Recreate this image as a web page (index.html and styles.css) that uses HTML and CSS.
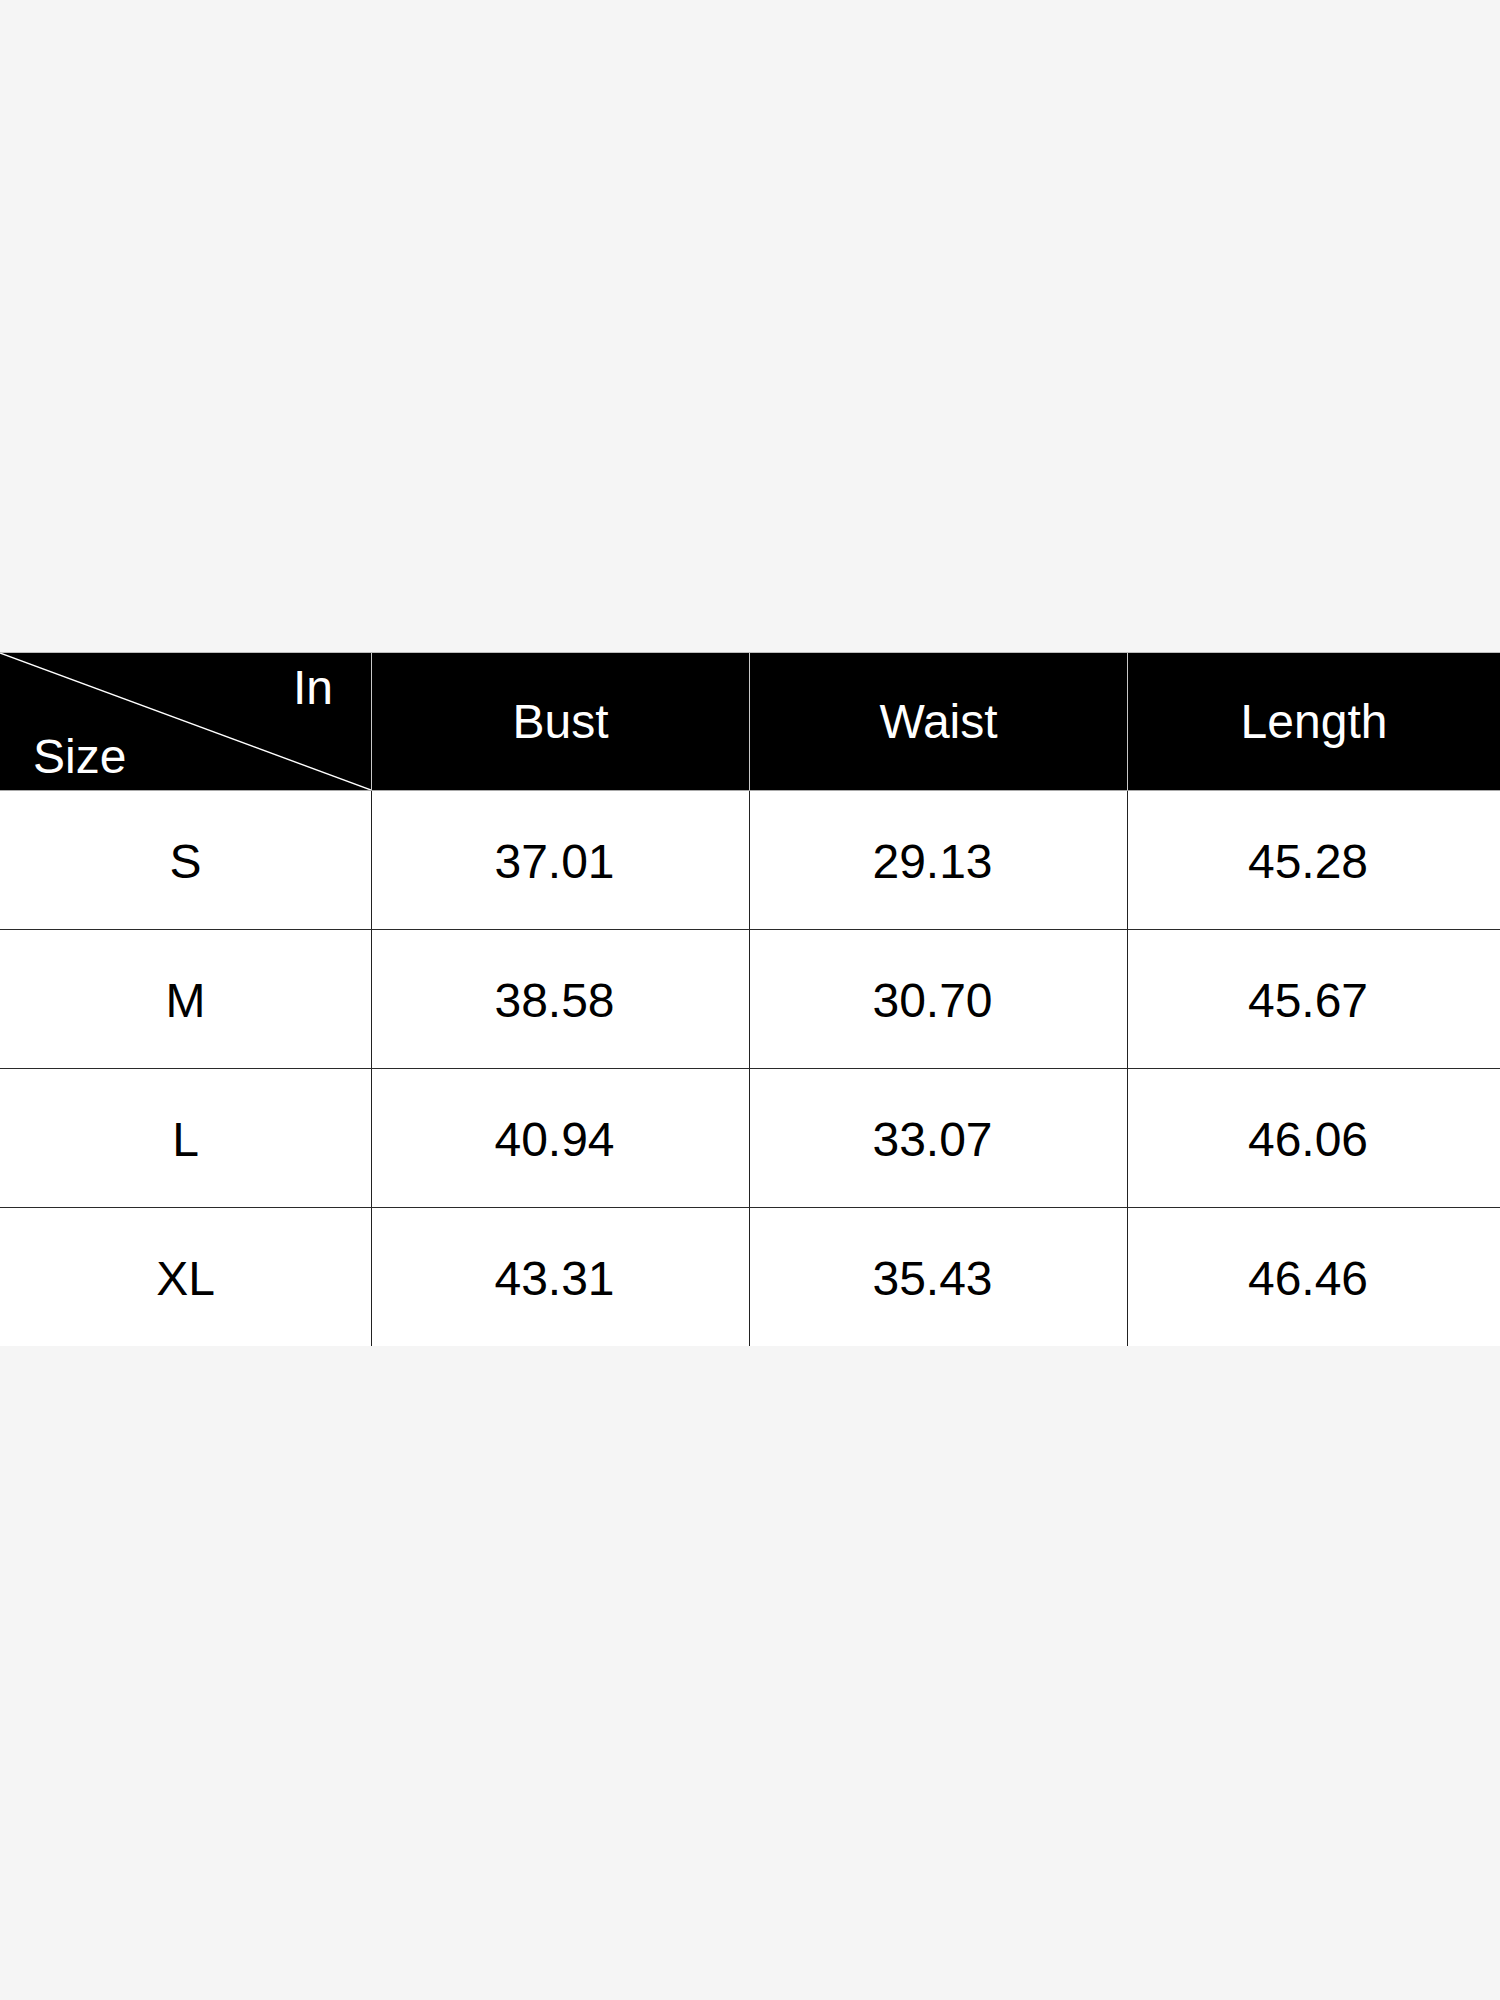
FILE: index.html
```html
<!DOCTYPE html>
<html lang="en">
<head>
<meta charset="utf-8">
<title>Size Chart</title>
<link rel="stylesheet" href="styles.css">
</head>
<body>
<main class="page">
  <div class="chart">
    <div class="row head">
      <div class="cell corner">
        <svg class="diag" viewBox="0 0 100 100" preserveAspectRatio="none" aria-hidden="true">
          <line x1="0" y1="0" x2="100" y2="100" stroke="#ffffff" stroke-width="1.4" vector-effect="non-scaling-stroke"/>
        </svg>
        <span class="in">In</span>
        <span class="size">Size</span>
      </div>
      <div class="cell">Bust</div>
      <div class="cell">Waist</div>
      <div class="cell">Length</div>
    </div>
    <div class="row body">
      <div class="cell">S</div>
      <div class="cell num">37.01</div>
      <div class="cell num">29.13</div>
      <div class="cell num">45.28</div>
    </div>
    <div class="row body">
      <div class="cell">M</div>
      <div class="cell num">38.58</div>
      <div class="cell num">30.70</div>
      <div class="cell num">45.67</div>
    </div>
    <div class="row body">
      <div class="cell">L</div>
      <div class="cell num">40.94</div>
      <div class="cell num">33.07</div>
      <div class="cell num">46.06</div>
    </div>
    <div class="row body last">
      <div class="cell">XL</div>
      <div class="cell num">43.31</div>
      <div class="cell num">35.43</div>
      <div class="cell num">46.46</div>
    </div>
  </div>
</main>
</body>
</html>
```

FILE: styles.css
```css
html, body {
  margin: 0;
  padding: 0;
  background: #f5f5f5;
}

.page {
  width: 1500px;
  height: 2000px;
  padding-top: 652px;
  box-sizing: border-box;
  font-family: "Liberation Sans", Arial, sans-serif;
}

.chart {
  width: 1500px;
  border-top: 1px solid #bdbdbd;
}

.row {
  display: grid;
  grid-template-columns: 371px 378px 378px 1fr;
  box-sizing: border-box;
}

.cell {
  display: flex;
  align-items: center;
  justify-content: center;
  font-size: 48px;
  line-height: 48px;
  padding-top: 4px;
  box-sizing: border-box;
}

.cell.num {
  padding-right: 12px;
}

.cell + .cell {
  border-left: 1px solid #222;
}

.head {
  height: 138px;
  background: #000;
  color: #fff;
  border-bottom: 1px solid #a8a8a8;
}

.head .cell + .cell {
  border-left: 1px solid #c8c8c8;
}

.head .cell {
  padding-top: 0;
}

.head .corner {
  position: relative;
  flex-direction: column;
  align-items: stretch;
  justify-content: space-between;
  padding: 11px 38px 9px 33px;
}

.diag {
  position: absolute;
  left: 0;
  top: 0;
  width: 100%;
  height: 100%;
}

.in {
  align-self: flex-end;
}

.size {
  align-self: flex-start;
}

.body {
  height: 139px;
  background: #fff;
  color: #000;
  border-bottom: 1px solid #2a2a2a;
}

.body.last {
  height: 138px;
  border-bottom: none;
}
```
